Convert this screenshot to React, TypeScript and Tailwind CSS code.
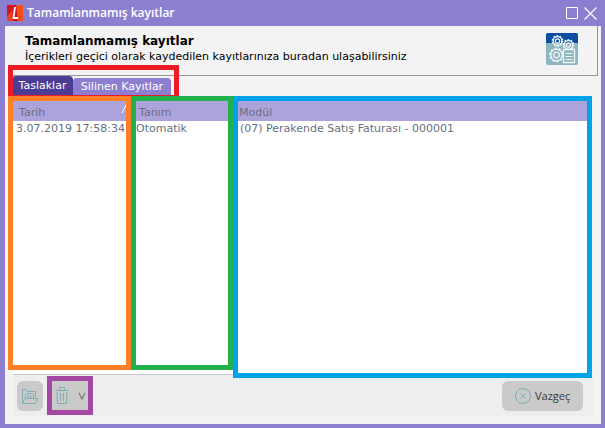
import { ReactNode } from 'react';

const rows = [
  { date: '3.07.2019 17:58:34', name: 'Otomatik', module: '(07) Perakende Satış Faturası - 000001' },
];

function AppLogo() {
  return (
    <svg viewBox="0 0 16 16" className="size-4 shrink-0">
      <rect width="16" height="16" fill="#d3141c" />
      <path d="M9 0h7v16h-5z" fill="#f0501e" />
      <path d="M0 12l5-7 1 11H0z" fill="#e8431c" />
      <path d="M8 2L6.500 13H11" fill="none" stroke="#fff" strokeWidth="1.8" />
    </svg>
  );
}

function Gear({ x, y, r }: { x: number; y: number; r: number }) {
  const step = ((r + 0.8) * Math.PI) / 10;
  return (
    <g transform={`translate(${x} ${y})`} fill="none" stroke="#f2f7f8">
      <circle r={r} strokeWidth="1.3" />
      <circle r={r + 0.8} strokeWidth="1.6" strokeDasharray={`${step} ${step}`} />
      <circle r={r * 0.5} strokeWidth="1.3" />
    </g>
  );
}

function RecordsIcon() {
  return (
    <svg viewBox="0 0 32 32" className="size-8 shrink-0">
      <rect width="32" height="32" rx="2" fill="#8db5bf" />
      <path d="M0 10V2a2 2 0 0 1 2-2h28a2 2 0 0 1 2 2v8z" fill="#0a4da2" />
      <Gear x={11.5} y={8} r={4.3} />
      <Gear x={22.5} y={12} r={4.3} />
      <Gear x={10.5} y={22} r={5.8} />
      <path d="M17.500 16.500h11v13h-11z" fill="#8db5bf" stroke="#f2f7f8" strokeWidth="1.3" />
      <path d="M19.500 20.500h7M19.500 23.500h7M19.500 26.500h7" stroke="#f2f7f8" strokeWidth="1.2" />
    </svg>
  );
}

function FolderIcon() {
  return (
    <svg viewBox="0 0 16 16" className="size-4" fill="none" stroke="#7fb0b7">
      <path d="M.5 15V1.500h4l1 2h8V9" />
      <path d="M.5 15.500L3 10.500h12.500l-2 5z" />
      <path d="M3.500 10V6.500l1.500-1h5l1.500 1V10M6 10V8h3v2" />
    </svg>
  );
}

function TrashIcon() {
  return (
    <svg viewBox="0 0 14 17" className="h-[17px] w-3.5" fill="none" stroke="#7fb0b7">
      <path d="M.5 3.500h13M4.500 3V.5h5V3M2 5l.5 11.500h9L12 5" />
      <path d="M5.500 6v8M8.500 6v8" />
    </svg>
  );
}

function ToolButton({ label, className, children }: { label: string; className: string; children: ReactNode }) {
  return (
    <button aria-label={label} className={`flex h-[30px] items-center bg-[#cacaca] ${className}`}>
      {children}
    </button>
  );
}

export default function App() {
  return (
    <div className="border-r-4 border-b-4 border-l-[5px] border-[#8c7fcf] bg-[#f3f3f3] font-['DejaVu_Sans',sans-serif] text-[11px] leading-4 text-black">
      <header className="flex h-[26px] items-center bg-[#8c7fcf] pr-1 pl-0.5 text-white">
        <AppLogo />
        <h1 className="ml-1 flex-1 font-['Open_Sans',sans-serif] text-xs font-semibold">Tamamlanmamış kayıtlar</h1>
        <button aria-label="Büyüt" className="mr-1.5">
          <svg viewBox="0 0 12 12" className="size-3" fill="none" stroke="currentColor">
            <path d="M.5.5h11v11H.5z" />
          </svg>
        </button>
        <button aria-label="Kapat">
          <svg viewBox="0 0 13 13" className="size-[13px]" fill="none" stroke="currentColor" strokeWidth="1.2">
            <path d="M.5.5l12 12M12.500.5l-12 12" />
          </svg>
        </button>
      </header>

      <div className="mr-[3px] ml-[3px] flex h-[50px] items-center justify-between border-r border-b border-[#96969c] pr-[19px] pb-1 pl-[17px]">
        <div>
          <h2 className="text-xs font-bold">Tamamlanmamış kayıtlar</h2>
          <p>İçerikleri geçici olarak kaydedilen kayıtlarınıza buradan ulaşabilirsiniz</p>
        </div>
        <RecordsIcon />
      </div>

      <div className="relative ml-[3px] flex h-5 w-[171px] items-end pl-1">
        <button className="h-5 w-[61px] rounded-t bg-[#4c3c96] text-white">Taslaklar</button>
        <button className="h-[18px] flex-1 rounded-t bg-[#8c7fcf] text-white">Silinen Kayıtlar</button>
        <div className="w-2" />
        <div className="pointer-events-none absolute inset-x-0 -top-[11px] -bottom-1 border-[5px] border-[#ed1c24]" />
      </div>

      <main className="relative mr-[9px] ml-[3px] h-[279px] pt-[5px] pl-[5px]">
        <div className="h-full border-b border-[#c8c8d8] bg-white">
          <table className="w-full table-fixed text-left text-[#667080]">
            <thead>
              <tr className="h-5 bg-[#ada3dc]">
                <th className="w-[120px] pt-1 pl-1.5 font-normal">
                  <div className="flex justify-between">
                    Tarih
                    <svg viewBox="0 0 12 8" className="h-2 w-3" stroke="#fff" fill="none">
                      <path d="M1 8l4-8 4 8" />
                    </svg>
                  </div>
                </th>
                <th className="w-[100px] pt-1 pl-1.5 font-normal">Tanım</th>
                <th className="pt-1 pl-1.5 font-normal">Modül</th>
              </tr>
            </thead>
            <tbody>
              {rows.map((row) => (
                <tr key={row.date}>
                  <td className="overflow-hidden pl-[3px] whitespace-nowrap">{row.date}</td>
                  <td className="pl-[3px]">{row.name}</td>
                  <td className="pl-[7px]">{row.module}</td>
                </tr>
              ))}
            </tbody>
          </table>
        </div>
        <div className="pointer-events-none absolute inset-x-0 top-0 flex h-[282px] items-start">
          <div className="h-[274px] w-[123px] border-[5px] border-[#ff7f27]" />
          <div className="h-[274px] w-[102px] border-[5px] border-[#22b14c]" />
          <div className="h-full flex-1 border-[5px] border-[#00a2e8]" />
        </div>
      </main>

      <footer className="mr-2 mb-2 ml-2 flex h-[41px] items-center bg-[#eeeeee] pr-2.5 pl-1">
        <ToolButton label="Aç" className="w-[26px] justify-center rounded-md">
          <FolderIcon />
        </ToolButton>
        <div className="ml-1 flex h-[39px] w-[46px] border-[5px] border-[#a349a4]">
          <ToolButton label="Sil" className="h-full w-full justify-between pr-0.5 pl-[3px]">
            <TrashIcon />
            <svg viewBox="0 0 8 8" className="size-2" fill="none" stroke="#777" strokeWidth="1.2">
              <path d="M1 1l3 6 3-6" />
            </svg>
          </ToolButton>
        </div>
        <button className="ml-auto flex h-[30px] w-[81px] items-center gap-1 rounded-md bg-[#cacaca] pl-[13px] font-['Open_Sans',sans-serif] text-[11px] text-[#3c3c3c]">
          <svg viewBox="0 0 16 16" className="size-4" fill="none" stroke="#7fb0b5">
            <circle cx="8" cy="8" r="7.500" />
            <path d="M5.500 5.500l5 5M10.500 5.500l-5 5" />
          </svg>
          Vazgeç
        </button>
      </footer>
    </div>
  );
}
